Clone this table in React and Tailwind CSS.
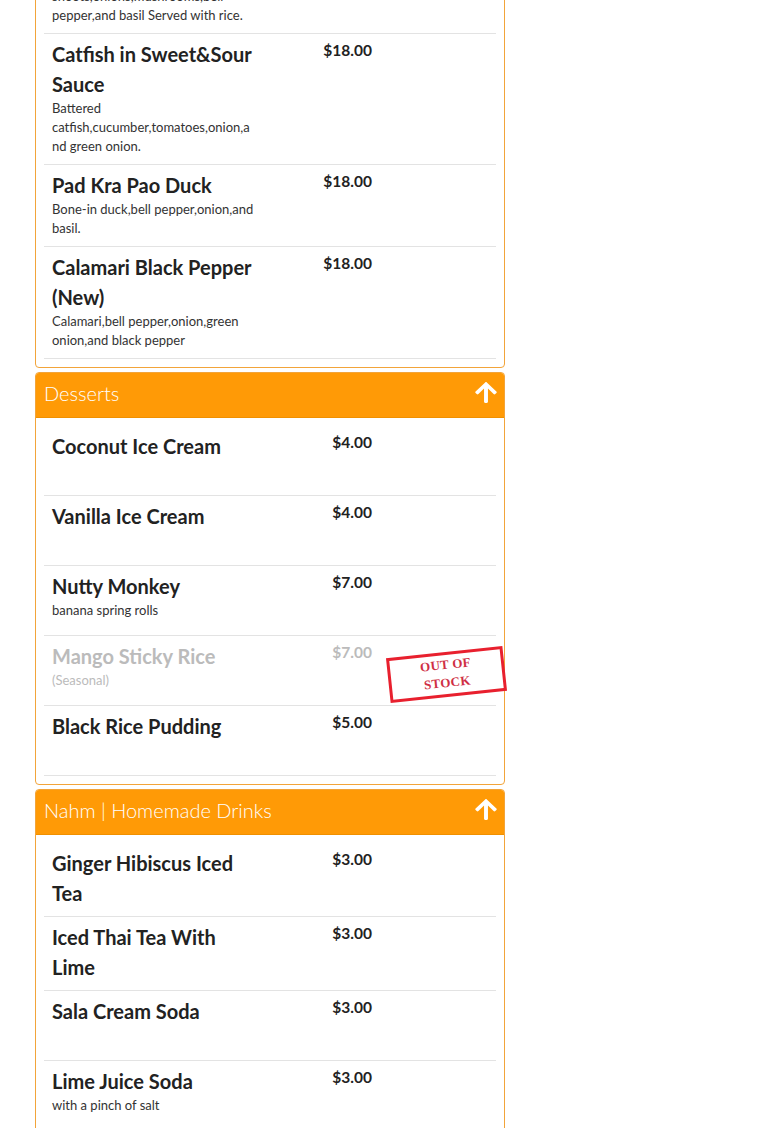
import React from "react";

const ArrowUp = () => (
  <svg viewBox="0 30 448 452" preserveAspectRatio="none" className="w-[22px] h-[21px]" fill="#ffffff">
    <path d="M34.9 289.5l-22.2-22.2c-9.4-9.4-9.4-24.6 0-33.9L207 39c9.4-9.4 24.6-9.4 33.9 0l194.3 194.3c9.4 9.4 9.4 24.6 0 33.9L413 289.4c-9.5 9.5-25 9.3-34.3-.4L264 168.6V456c0 13.3-10.7 24-24 24h-32c-13.3 0-24-10.7-24-24V168.6L69.2 289.1c-9.3 9.8-24.8 10-34.3.4z" />
  </svg>
);

function Row({ name, desc, price, out, minH = true }) {
  const nameC = out ? "text-[#bbbbbb]" : "text-[#222222]";
  const descC = out ? "text-[#bbbbbb]" : "text-[#333333]";
  return (
    <div
      className={`relative flex border-b border-[#e3e3e3] px-2 pt-[5px] pb-[8px] ${
        minH ? "min-h-[70px]" : ""
      }`}
    >
      <div className="w-[203px] shrink-0 [overflow-wrap:anywhere]">
        <div className={`text-[20px] leading-[30px] font-bold ${nameC}`}>{name}</div>
        {desc && <div className={`text-[13px] leading-[19px] ${descC}`}>{desc}</div>}
      </div>
      <div
        className={`w-[117px] text-right text-[15.5px] leading-[22px] font-bold ${
          out ? "text-[#bbbbbb]" : "text-[#222222]"
        }`}
      >
        {price}
      </div>
      {out && (
        <div className="absolute left-[344px] top-[16px] w-[117px] h-[45px] -rotate-6 border-[3px] border-[#e8202e] flex flex-col items-center justify-center pb-[2px]">
          <div className="text-[13px] leading-[18px] font-bold text-[#cf2f45] [font-family:'Liberation_Serif',serif] tracking-[0.3px]">
            OUT OF
          </div>
          <div className="text-[13px] leading-[18px] font-bold text-[#cf2f45] [font-family:'Liberation_Serif',serif] tracking-[0.3px]">
            STOCK
          </div>
        </div>
      )}
    </div>
  );
}

function Panel({ title, children, className = "" }) {
  return (
    <div className={`border border-[#f2a43a] rounded-[4px] bg-white ${className}`}>
      {title && (
        <div className="h-[45px] bg-[#ff9a06] border-b border-[#f09000] flex items-center justify-between pl-[8px] pr-[7px] pb-[5px] rounded-t-[3px]">
          <span className="text-white text-[20px] font-light leading-[28px]">{title}</span>
          <ArrowUp />
        </div>
      )}
      <div className="px-[8px] pb-[8px] pt-[8px]">{children}</div>
    </div>
  );
}

export default function App() {
  return (
    <div className="w-[770px] h-[1128px] bg-white overflow-hidden [font-family:Lato,'Liberation_Sans',sans-serif]">
      <div className="ml-[35px] w-[470px] -mt-[22px] flex flex-col gap-[4px]">
        <Panel className="rounded-t-none">
          <div className="border-b border-[#e3e3e3] px-2 pb-[8px]">
            <div className="text-[13px] leading-[19px] text-[#333333] w-[203px]">
              shoots,onions,mushrooms,bell pepper,and basil Served with rice.
            </div>
          </div>
          <Row
            minH={false}
            name="Catfish in Sweet&Sour Sauce"
            desc="Battered catfish,cucumber,tomatoes,onion,and green onion."
            price="$18.00"
          />
          <Row
            minH={false}
            name="Pad Kra Pao Duck"
            desc="Bone-in duck,bell pepper,onion,and basil."
            price="$18.00"
          />
          <Row
            minH={false}
            name="Calamari Black Pepper (New)"
            desc="Calamari,bell pepper,onion,green onion,and black pepper"
            price="$18.00"
          />
        </Panel>
        <Panel title="Desserts">
          <Row name="Coconut Ice Cream" price="$4.00" />
          <Row name="Vanilla Ice Cream" price="$4.00" />
          <Row name="Nutty Monkey" desc="banana spring rolls" price="$7.00" />
          <Row name="Mango Sticky Rice" desc="(Seasonal)" price="$7.00" out />
          <Row name="Black Rice Pudding" price="$5.00" />
        </Panel>
        <Panel title="Nahm | Homemade Drinks">
          <Row name="Ginger Hibiscus Iced Tea" price="$3.00" />
          <Row name="Iced Thai Tea With Lime" price="$3.00" />
          <Row name="Sala Cream Soda" price="$3.00" />
          <Row name="Lime Juice Soda" desc="with a pinch of salt" price="$3.00" />
        </Panel>
      </div>
    </div>
  );
}
